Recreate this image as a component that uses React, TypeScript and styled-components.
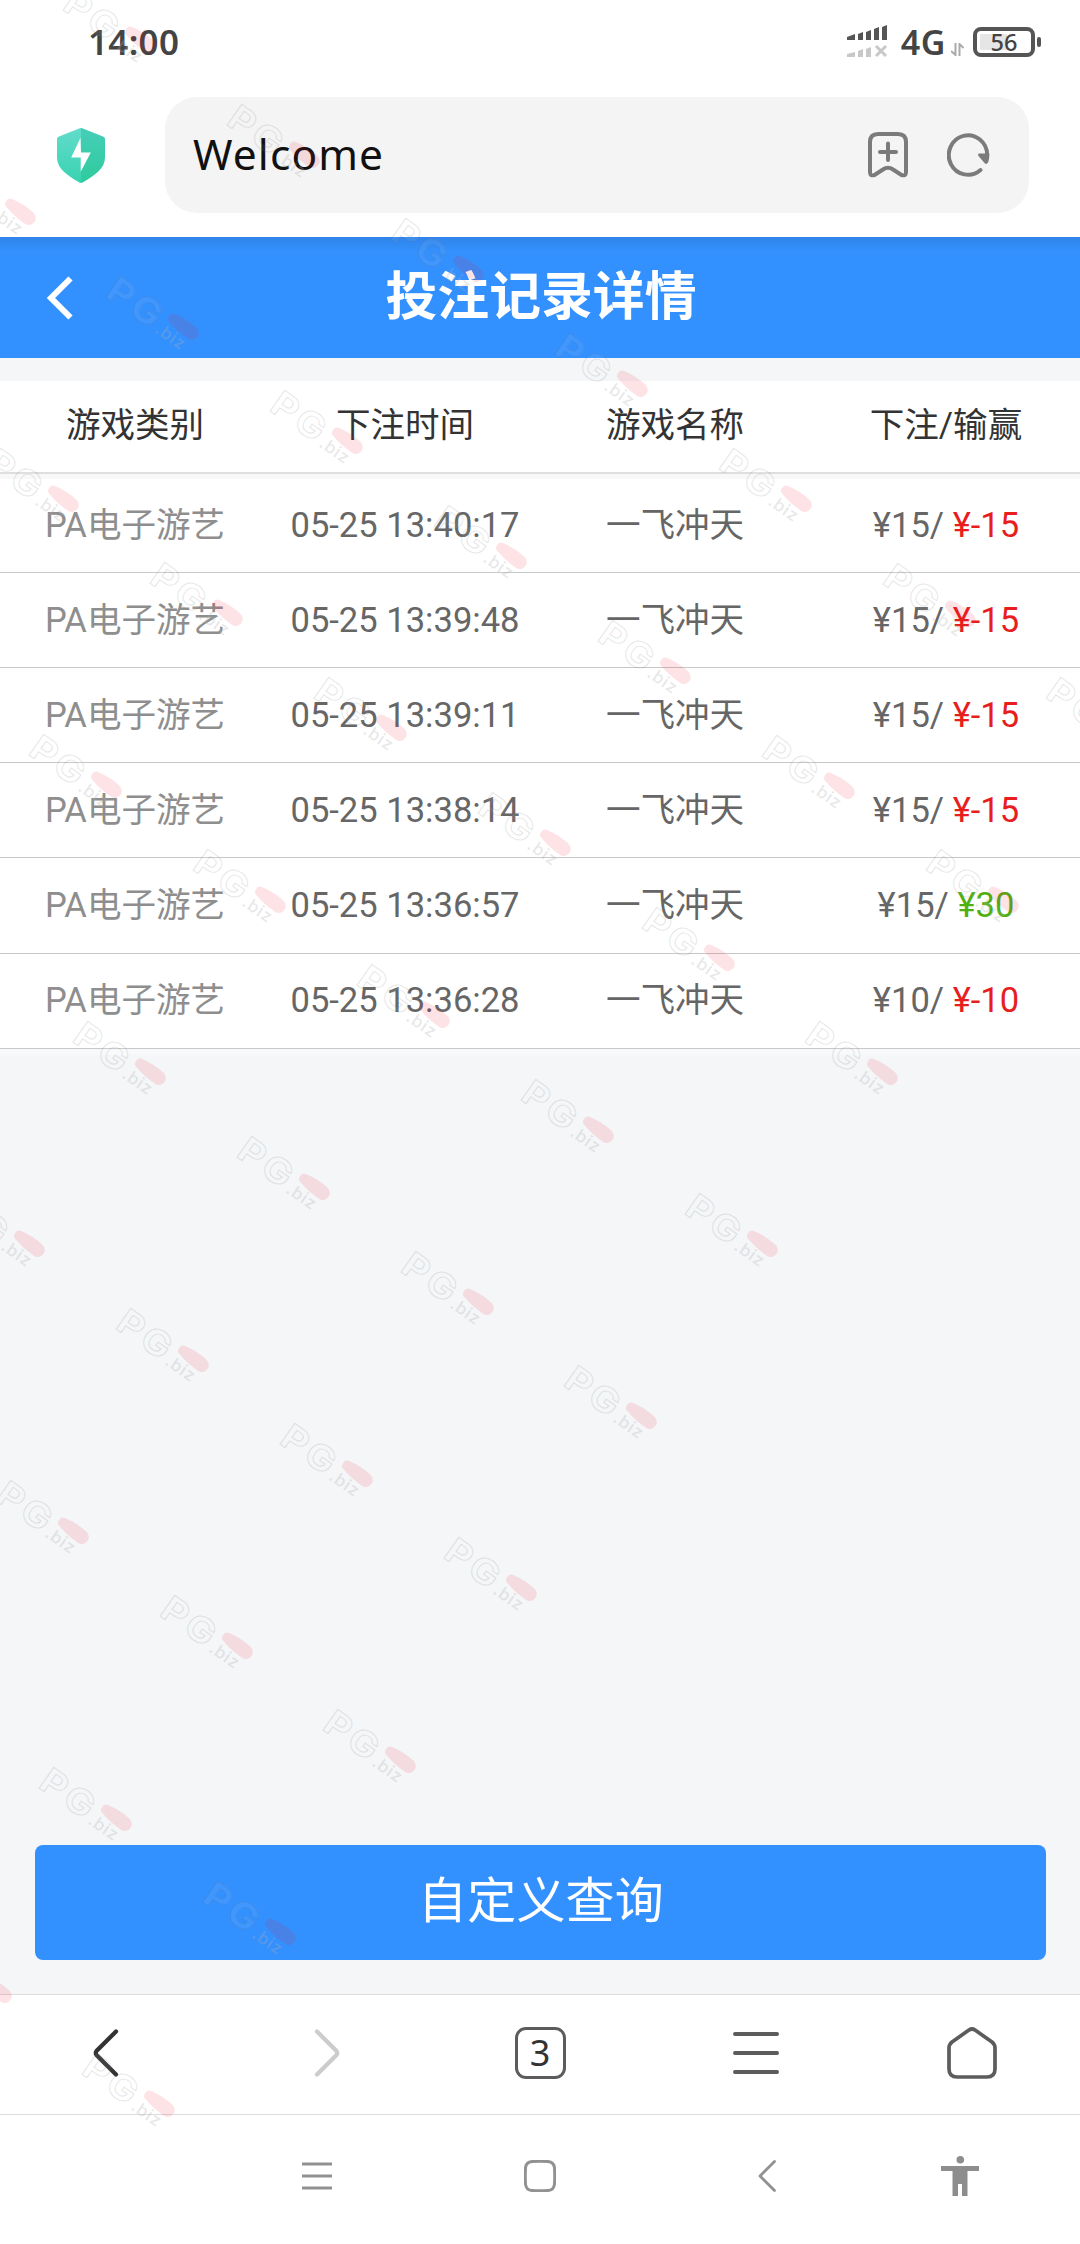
import React from "react";
import styled, { createGlobalStyle } from "styled-components";

const GlobalStyle = createGlobalStyle`
  *, *::before, *::after { box-sizing: border-box; }
  html, body { margin: 0; padding: 0; background: #fff; }
  svg { display: block; flex: none; }
`;

const cjk = `Roboto, "Noto Sans CJK SC", sans-serif`;
const systemFont = `"Noto Sans", "Noto Sans CJK SC", sans-serif`;

const Screen = styled.div`
  position: relative;
  display: flex;
  flex-direction: column;
  width: 1080px;
  height: 2244px;
  overflow: hidden;
  background: #fff;
  font-family: ${cjk};
`;

/* ---------- status bar ---------- */
const StatusBar = styled.header`
  display: flex;
  align-items: center;
  justify-content: space-between;
  height: 85px;
  padding: 0 39px 1px 88px;
  font-family: ${systemFont};
  color: #444;
`;

const Clock = styled.time`
  font-size: 35px;
  font-weight: 600;
  letter-spacing: 0.3px;
  line-height: 48px;
`;

const StatusIcons = styled.div`
  display: flex;
  align-items: center;
`;

const Network = styled.span`
  margin-left: 13px;
  font-size: 34px;
  font-weight: 600;
  letter-spacing: 0.5px;
  line-height: 48px;
`;

const Battery = styled.div`
  display: flex;
  align-items: center;
  gap: 2px;
  margin-left: 9px;
`;

const BatteryBody = styled.div`
  display: flex;
  align-items: center;
  justify-content: center;
  width: 62px;
  height: 30px;
  border: 4px solid #555;
  border-radius: 8px;
  font-size: 23.5px;
  font-weight: 500;
  line-height: 22px;
  background: linear-gradient(#e6e6e6, #e6e6e6) 3px 3px / 27px 16px no-repeat;
`;

const BatteryTip = styled.i`
  width: 4px;
  height: 10px;
  border-radius: 2px;
  background: #555;
`;

/* ---------- browser bar ---------- */
const BrowserBar = styled.div`
  display: flex;
  align-items: flex-start;
  height: 152px;
  padding: 12px 51px 0 57px;
`;

const ShieldSlot = styled.div`
  width: 108px;
  padding-top: 31px;
`;

const AddressBox = styled.div`
  display: flex;
  flex: 1;
  align-items: center;
  height: 116px;
  padding: 0 39px 0 28px;
  border-radius: 32px;
  background: #f4f4f4;
`;

const Address = styled.span`
  flex: 1;
  padding-bottom: 3px;
  font-family: ${systemFont};
  font-size: 42.5px;
  letter-spacing: 1.1px;
  color: #111;
`;

const AddressActions = styled.div`
  display: flex;
  align-items: center;
  gap: 38px;
`;

/* ---------- page ---------- */
const TitleBar = styled.div`
  display: grid;
  grid-template-columns: 120px 1fr 120px;
  align-items: center;
  height: 121px;
  background: linear-gradient(#2f84e9 0, #3390fc 14px, #3391ff 22px);
`;

const BackSlot = styled.div`
  padding: 1px 0 0 46px;
`;

const Title = styled.h1`
  margin: 0;
  padding-left: 2px;
  text-align: center;
  font-size: 51.84px;
  font-weight: 700;
  line-height: 76px;
  color: #fff;
`;

const Page = styled.main`
  display: flex;
  flex: 1;
  flex-direction: column;
  padding-top: 23px;
  background: #f4f6f8;
`;

const Row = styled.div`
  display: grid;
  grid-template-columns: repeat(4, 270px);
  align-items: center;
  text-align: center;
  font-size: 34.56px;
  line-height: 50px;

  & > :last-child { padding-left: 2px; }
`;

const HeadRow = styled(Row)`
  height: 93px;
  padding-bottom: 3px;
  border-bottom: 2px solid #dedede;
  background: #fff;
  color: #333;
`;

const Records = styled.div`
  border-top: 5px solid #f8f8f8;
  border-bottom: 6px solid #f8f9fa;
`;

const RecordRow = styled(Row)`
  height: 95.16px;
  padding-bottom: 1px;
  border-bottom: 1.2px solid #c8c8c8;
  background: #fff;
  color: #666;

  &:first-child { height: 94px; }
`;

const Category = styled.span`
  color: #8e8e8e;
`;

const Result = styled.span<{ $win: boolean }>`
  color: ${(p) => (p.$win ? "#4fb010" : "#e81e1e")};
`;

const QueryButton = styled.button`
  height: 115px;
  margin: auto 34px 34px 35px;
  padding: 0 0 2px 1px;
  border: 0;
  border-radius: 8px;
  background: #3391ff;
  font-family: ${cjk};
  font-size: 49px;
  letter-spacing: 0.2px;
  line-height: 72px;
  color: #fff;
`;

/* ---------- bottom bars ---------- */
const Toolbar = styled.nav`
  display: grid;
  grid-template-columns: repeat(5, 216px);
  align-items: center;
  justify-items: center;
  height: 120px;
  padding-bottom: 3px;
  border-top: 1px solid #dcdcdc;
`;

const Nudge = styled.div<{ $x: number }>`
  transform: translateX(${(p) => p.$x}px);
`;

const TabCount = styled.div`
  display: flex;
  align-items: center;
  justify-content: center;
  width: 51px;
  height: 52px;
  border: 3.5px solid #5c5c5c;
  border-radius: 11px;
  font-family: ${systemFont};
  font-size: 36px;
  line-height: 44px;
  color: #333;
`;

const SystemNav = styled.nav`
  display: grid;
  grid-template-columns: 204px 226px 220px 233px 153px;
  align-items: center;
  justify-items: center;
  height: 130px;
  padding-bottom: 8px;
  border-top: 1px solid #dcdcdc;
`;

/* ---------- watermark ---------- */
const WatermarkLayer = styled.div`
  position: absolute;
  inset: 0;
  overflow: hidden;
  pointer-events: none;
`;

const MarkSvg = styled.svg`
  position: absolute;
  width: 120px;
  height: 100px;
  overflow: visible;
`;

const Mark = ({ x, y }: { x: number; y: number }) => (
  <MarkSvg viewBox="-60 -50 120 100" style={{ left: x - 60, top: y - 50 }} aria-hidden="true">
    <g transform="rotate(35)" fontFamily="Inter, sans-serif" fontWeight="700">
      <text transform="scale(1.12 1)" x="-44.500" y="12.500" fontSize="35" letterSpacing="3" fill="#ffffff" fillOpacity="0.08" stroke="#707070" strokeOpacity="0.17" strokeWidth="1.100">
        PG
      </text>
      <text x="12" y="13.500" fontSize="17" letterSpacing="0.800" fontWeight="500" fill="#b0b0b0" fillOpacity="0.300">
        .biz
      </text>
      <path d="M19.500 -13.300Q32 -16 44 -14.200A7 7 0 0 1 44.500 -0.300Q31 0 19.500 -3.200A5.100 5.100 0 0 1 19.500 -13.300Z" fill="#f01835" fillOpacity="0.120" />
    </g>
  </MarkSvg>
);

const marks = Array.from({ length: 7 * 12 }, (_, n) => {
  const i = n % 7;
  const j = Math.floor(n / 7);
  return { x: 109 + i * 163.9 - j * 120.5, y: 27 + i * 114.7 + j * 172 };
}).filter((m) => m.x > -42 && m.x < 1115 && m.y < 2270);

/* ---------- icons ---------- */
const Signal = () => (
  <svg width="41" height="34" viewBox="0 0 41 34">
    <path fill="#555" d="M0 12l8-3v6H0zM11 9l5-2v8h-5zM19 7l5-2v10h-5zM27 4l5-2v13h-5zM35 2l5-2v15h-5z" />
    <path fill="#c8c8c8" d="M0 29l8-2v5H0zM11 26l5-2v8h-5zM19 24l5-2v10h-5z" />
    <path stroke="#c8c8c8" strokeWidth="3" d="M29 21l10 10M39 21l-10 10" />
  </svg>
);

const ArrowsSvg = styled.svg`
  margin: 14px 0 0 5px;
`;

const DataArrows = () => (
  <ArrowsSvg width="13" height="13" viewBox="0 0 13 13" fill="none" stroke="#aaa" strokeWidth="2">
    <path d="M4.500 0v12L0 8M8.500 13V1l4 4" />
  </ArrowsSvg>
);

const Shield = () => (
  <svg width="48" height="55" viewBox="0 0 49 56">
    <defs>
      <linearGradient id="shieldLeft" x1="0" y1="0" x2="0" y2="1">
        <stop offset="0" stopColor="#62dccb" />
        <stop offset="1" stopColor="#38d2b0" />
      </linearGradient>
      <linearGradient id="shieldRight" x1="0" y1="0" x2="0" y2="1">
        <stop offset="0" stopColor="#45ceb8" />
        <stop offset="1" stopColor="#2fcb9d" />
      </linearGradient>
    </defs>
    <path fill="url(#shieldLeft)" d="M24.5 0Q23 0 22 .6L2 8.500Q0 9.300 0 11V30C0 41 10 48 22 55Q23.500 56 24.500 56z" />
    <path fill="url(#shieldRight)" d="M24.500 0Q26 0 27 .6L47 8.500Q49 9.300 49 11V30C49 41 39 48 27 55Q25.500 56 24.500 56z" />
    <path fill="#fff" d="M24 10L14.500 30h9.700v14.500L34.500 25h-10z" />
  </svg>
);

const Bookmark = () => (
  <svg width="42" height="46" viewBox="0 0 42 46" fill="none" stroke="#7b7b7b" strokeWidth="4" strokeLinecap="round" strokeLinejoin="round">
    <path d="M11 2H31Q39 2 39 10V40Q39 44.500 34.500 43L26 37.500Q21 34 16 37.500L7.500 43Q3 44.500 3 40V10Q3 2 11 2Z" />
    <path d="M21 11.500V28M13 20H29" />
  </svg>
);

const Reload = () => (
  <svg width="43" height="44" viewBox="0 0 43 44">
    <path d="M33.500 37A19.200 19.700 0 1 1 40.200 22" fill="none" stroke="#7b7b7b" strokeWidth="4" strokeLinecap="round" />
    <path fill="#7b7b7b" d="M32 20.500H42.300Q42.300 27 41 29.500Q39.500 32 37.500 30L31.500 23Q30.500 20.500 32 20.500Z" />
  </svg>
);

const TitleBack = () => (
  <svg width="27" height="44" viewBox="0 0 27 44" fill="none" stroke="#fff" strokeWidth="6">
    <path d="M24.500 2.500L5 22L24.500 41.500" />
  </svg>
);

const Chevron = ({ color, flip }: { color: string; flip?: boolean }) => (
  <svg width="26" height="48" viewBox="0 0 26 48" fill="none" stroke={color} strokeWidth="4.200" strokeLinecap="round">
    <path d={flip ? "M3 2.500L22.500 22Q24 24 22.500 26L3 45.500" : "M23 2.500L3.500 22Q2 24 3.500 26L23 45.500"} />
  </svg>
);

const MenuLines = () => (
  <svg width="46" height="42" viewBox="0 0 46 42" stroke="#5c5c5c" strokeWidth="4" strokeLinecap="round">
    <path d="M2 2H44M2 21H44M2 40H44" />
  </svg>
);

const Home = () => (
  <svg width="50" height="52" viewBox="0 0 50 52" fill="none" stroke="#5c5c5c" strokeWidth="3.700" strokeLinejoin="round">
    <path d="M22 3Q25 1 28 3L45 15Q48 17.500 48 21V42Q48 50 40 50H10Q2 50 2 42V21Q2 17.500 5 15Z" />
  </svg>
);

const Recents = () => (
  <svg width="30" height="28" viewBox="0 0 30 28" stroke="#919191" strokeWidth="3">
    <path d="M0 2H30M0 14H30M0 26H30" />
  </svg>
);

const SystemHome = () => (
  <svg width="32" height="32" viewBox="0 0 32 32" fill="none" stroke="#919191" strokeWidth="3">
    <path d="M8 1.500Q16 1 24 1.500Q30 2 30.500 8Q31 16 30.500 24Q30 30 24 30.500Q16 31 8 30.500Q2 30 1.500 24Q1 16 1.500 8Q2 2 8 1.500Z" />
  </svg>
);

const SystemBack = () => (
  <svg width="18" height="32" viewBox="0 0 18 32" fill="none" stroke="#919191" strokeWidth="2.800" strokeLinecap="round" strokeLinejoin="round">
    <path d="M16.500 1.500L2 16L16.500 30.500" />
  </svg>
);

const Accessibility = () => (
  <svg width="38" height="40" viewBox="0 0 38 40" fill="#8d8d8d">
    <circle cx="19.300" cy="3.800" r="3.800" />
    <path d="M0 10H38V15H26.500V40H21V28H17V40H11.500V15H0Z" />
  </svg>
);

const headings = ["游戏类别", "下注时间", "游戏名称", "下注/输赢"];

const records = [
  { time: "05-25 13:40:17", bet: 15, result: -15 },
  { time: "05-25 13:39:48", bet: 15, result: -15 },
  { time: "05-25 13:39:11", bet: 15, result: -15 },
  { time: "05-25 13:38:14", bet: 15, result: -15 },
  { time: "05-25 13:36:57", bet: 15, result: 30 },
  { time: "05-25 13:36:28", bet: 10, result: -10 },
];

export default function App() {
  return (
    <>
      <GlobalStyle />
      <Screen>
        <StatusBar>
          <Clock>14:00</Clock>
          <StatusIcons>
            <Signal />
            <Network>4G</Network>
            <DataArrows />
            <Battery>
              <BatteryBody>56</BatteryBody>
              <BatteryTip />
            </Battery>
          </StatusIcons>
        </StatusBar>

        <BrowserBar>
          <ShieldSlot>
            <Shield />
          </ShieldSlot>
          <AddressBox>
            <Address>Welcome</Address>
            <AddressActions>
              <Bookmark />
              <Reload />
            </AddressActions>
          </AddressBox>
        </BrowserBar>

        <TitleBar>
          <BackSlot>
            <TitleBack />
          </BackSlot>
          <Title>投注记录详情</Title>
        </TitleBar>

        <Page>
          <HeadRow>
            {headings.map((h) => (
              <span key={h}>{h}</span>
            ))}
          </HeadRow>
          <Records>
            {records.map((r) => (
              <RecordRow key={r.time}>
                <Category>PA电子游艺</Category>
                <span>{r.time}</span>
                <span>一飞冲天</span>
                <span>
                  {`¥${r.bet}/ `}
                  <Result $win={r.result > 0}>{`¥${r.result}`}</Result>
                </span>
              </RecordRow>
            ))}
          </Records>
          <QueryButton>自定义查询</QueryButton>
        </Page>

        <Toolbar>
          <Nudge $x={-2}>
            <Chevron color="#333" />
          </Nudge>
          <Nudge $x={3}>
            <Chevron color="#ccc" flip />
          </Nudge>
          <TabCount>3</TabCount>
          <MenuLines />
          <Home />
        </Toolbar>

        <SystemNav>
          <span />
          <Recents />
          <SystemHome />
          <SystemBack />
          <Accessibility />
        </SystemNav>

        <WatermarkLayer>
          {marks.map((m, n) => (
            <Mark key={n} x={m.x} y={m.y} />
          ))}
        </WatermarkLayer>
      </Screen>
    </>
  );
}
